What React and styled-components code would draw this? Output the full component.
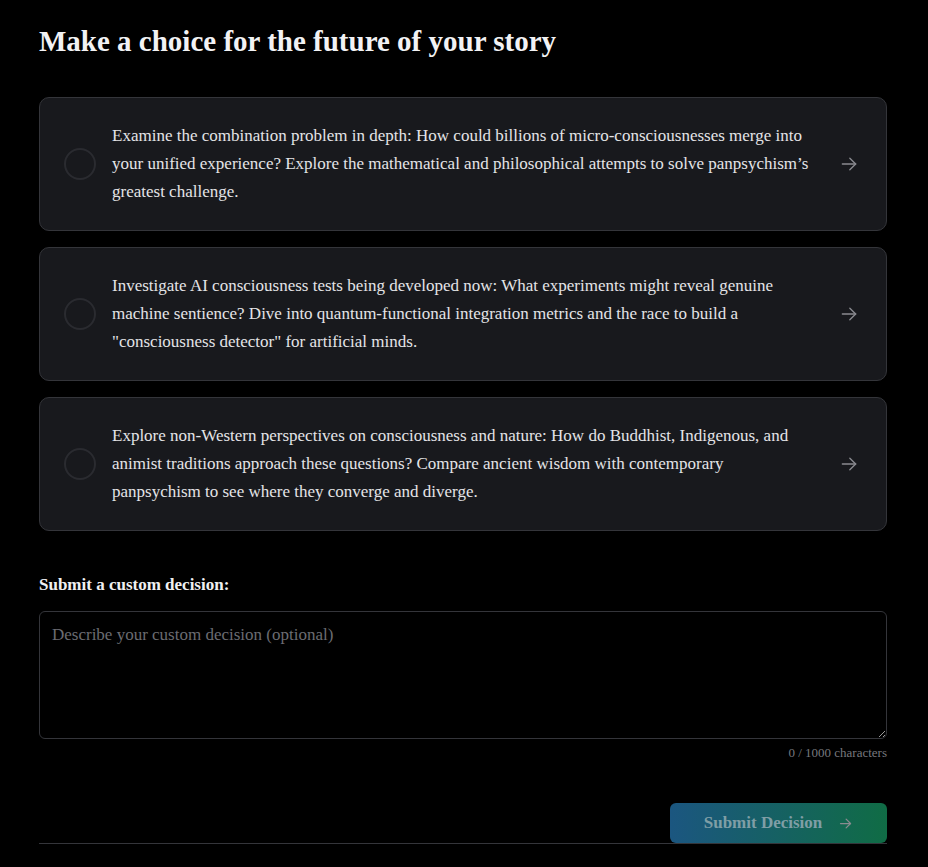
import styled, { createGlobalStyle } from 'styled-components';

const GlobalStyle = createGlobalStyle`
  html, body {
    margin: 0;
    padding: 0;
    background: #000;
  }
  body {
    font-family: "Liberation Serif", "DejaVu Serif", serif;
    color: #e8e8ea;
  }
  * {
    box-sizing: border-box;
  }
`;

const Page = styled.div`
  padding: 23px 41px 0 39px;
  min-height: 867px;
  background: #000;
`;

const Title = styled.h1`
  margin: 0 0 38px 0;
  font-size: 29px;
  line-height: 36px;
  font-weight: 700;
  color: #f2f2f4;
`;

const ChoiceList = styled.div`
  display: flex;
  flex-direction: column;
  gap: 16px;
`;

const ChoiceCard = styled.button`
  display: flex;
  align-items: center;
  gap: 16px;
  width: 100%;
  height: 134px;
  padding: 0 27px 0 24px;
  background: #18191d;
  border: 1px solid #34353a;
  border-radius: 10px;
  text-align: left;
  font-family: inherit;
  cursor: pointer;
`;

const Radio = styled.span`
  flex: 0 0 32px;
  width: 32px;
  height: 32px;
  border-radius: 50%;
  border: 2px solid #2a2b30;
`;

const ChoiceText = styled.span`
  flex: 1;
  font-size: 17px;
  line-height: 28px;
  color: #e4e4e7;
  padding-right: 12px;
`;

const Arrow = styled.svg`
  flex: 0 0 auto;
  color: #8a8b90;
`;

const Label = styled.div`
  margin-top: 42px;
  font-size: 17px;
  line-height: 24px;
  font-weight: 700;
  color: #f0f0f2;
`;

const TextArea = styled.textarea`
  display: block;
  width: 100%;
  height: 128px;
  margin-top: 14px;
  padding: 10px 12px;
  background: #000;
  border: 1px solid #34353a;
  border-radius: 6px;
  color: #e4e4e7;
  font-family: inherit;
  font-size: 17px;
  line-height: 26px;
  outline: none;
  &::placeholder {
    color: #6b6c72;
  }
`;

const CharCount = styled.div`
  margin-top: 5px;
  text-align: right;
  font-size: 13px;
  line-height: 18px;
  color: #77787e;
`;

const Actions = styled.div`
  display: flex;
  justify-content: flex-end;
  margin-top: 41px;
`;

const SubmitButton = styled.button`
  display: flex;
  align-items: center;
  justify-content: center;
  gap: 16px;
  width: 217px;
  height: 40px;
  border: none;
  border-radius: 6px;
  background: linear-gradient(90deg, #1b5680, #106c45);
  color: #7f9ea6;
  font-family: inherit;
  font-size: 17px;
  font-weight: 700;
  cursor: not-allowed;
`;

const Divider = styled.div`
  border-top: 1px solid #34353a;
`;

const ArrowIcon = ({ size = 20, weight = 1.6 }) => (
  <Arrow width={size} height={size} viewBox="0 0 24 24" fill="none" stroke="currentColor" strokeWidth={weight} strokeLinecap="round" strokeLinejoin="round">
    <path d="M4 12h16" />
    <path d="M13 5l7 7-7 7" />
  </Arrow>
);

const choices = [
  'Examine the combination problem in depth: How could billions of micro-consciousnesses merge into your unified experience? Explore the mathematical and philosophical attempts to solve panpsychism\u2019s greatest challenge.',
  'Investigate AI consciousness tests being developed now: What experiments might reveal genuine machine sentience? Dive into quantum-functional integration metrics and the race to build a "consciousness detector" for artificial minds.',
  'Explore non-Western perspectives on consciousness and nature: How do Buddhist, Indigenous, and animist traditions approach these questions? Compare ancient wisdom with contemporary panpsychism to see where they converge and diverge.',
];

const App = () => {
  return (
    <Page>
      <GlobalStyle />
      <Title>Make a choice for the future of your story</Title>
      <ChoiceList>
        {choices.map((text, i) => (
          <ChoiceCard key={i}>
            <Radio />
            <ChoiceText>{text}</ChoiceText>
            <ArrowIcon />
          </ChoiceCard>
        ))}
      </ChoiceList>
      <Label>Submit a custom decision:</Label>
      <TextArea placeholder="Describe your custom decision (optional)" />
      <CharCount>0 / 1000 characters</CharCount>
      <Actions>
        <SubmitButton disabled>
          Submit Decision
          <ArrowIcon size={15} weight={2} />
        </SubmitButton>
      </Actions>
      <Divider />
    </Page>
  );
};

export default App;
